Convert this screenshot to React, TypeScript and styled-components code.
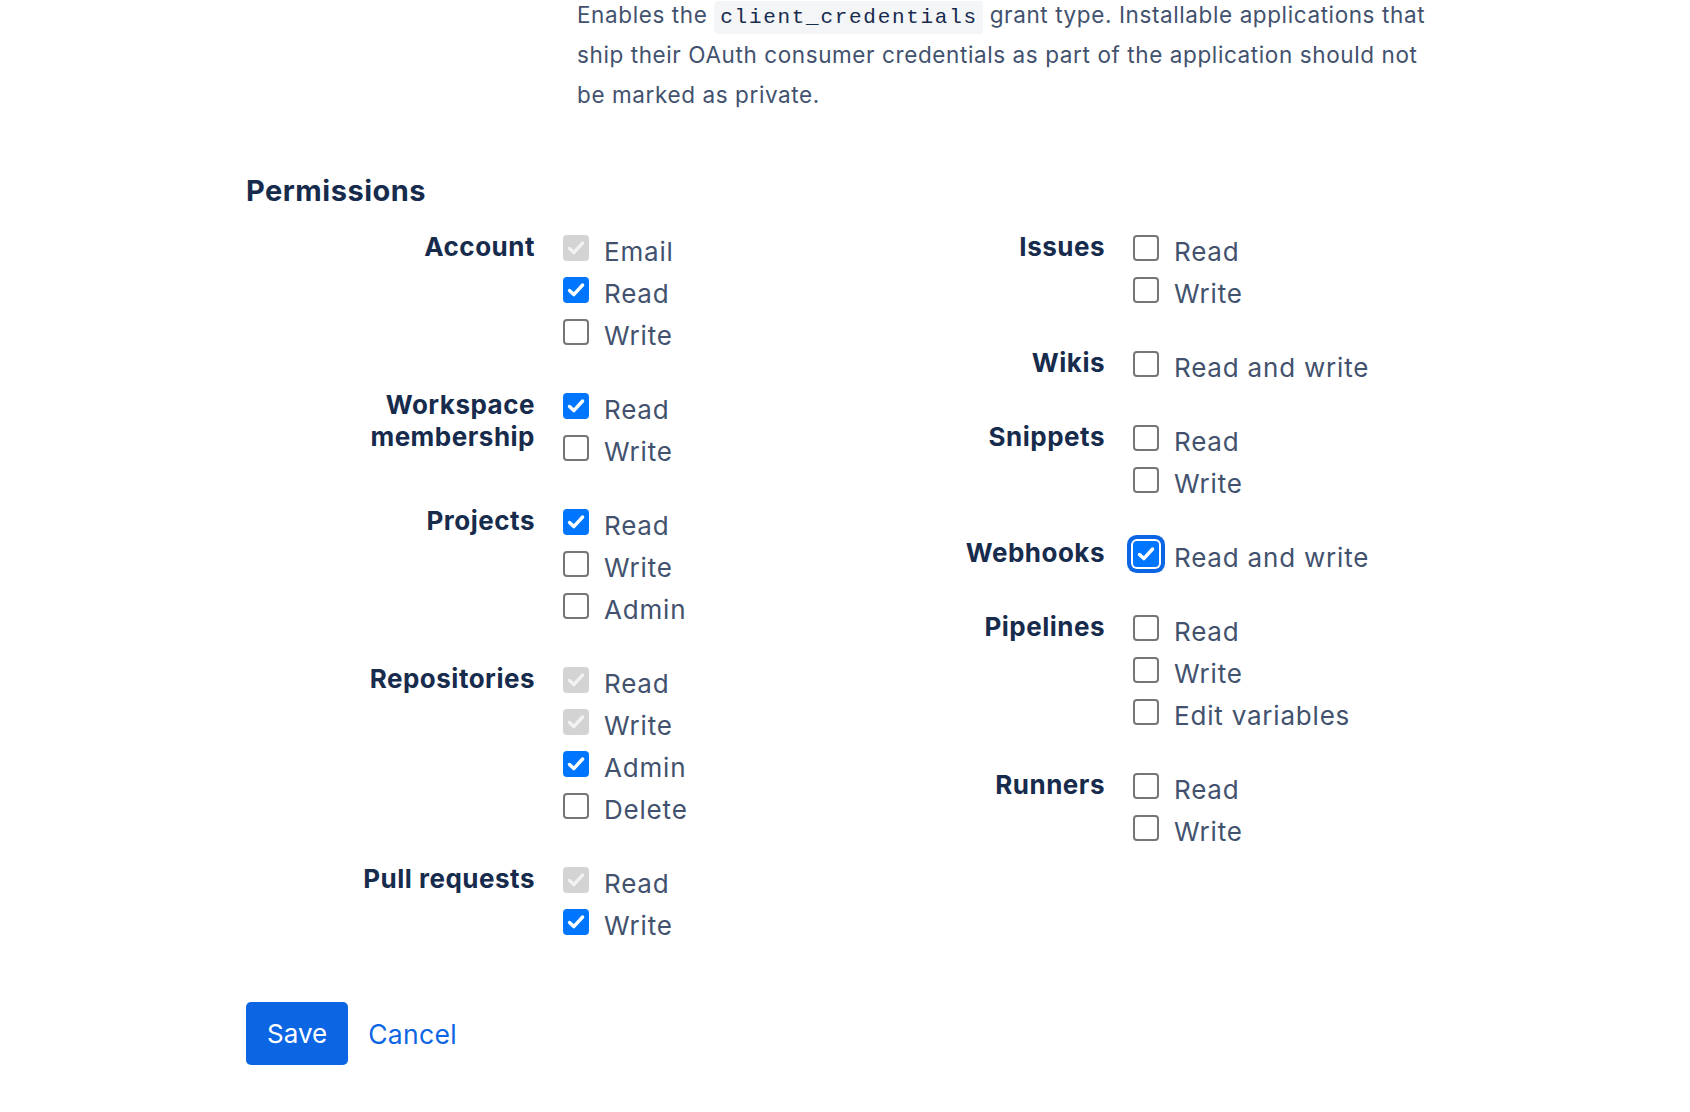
import { FunctionComponent, useState } from 'react';
import { createGlobalStyle, styled } from 'styled-components';

type CheckState = 'off' | 'on' | 'disabled';

type PermissionOption = {
  id: string;
  text: string;
  state: CheckState;
  focused?: boolean;
};

type PermissionGroup = {
  label: string;
  options: PermissionOption[];
};

const leftGroups: PermissionGroup[] = [
  {
    label: 'Account',
    options: [
      { id: 'account-email', text: 'Email', state: 'disabled' },
      { id: 'account-read', text: 'Read', state: 'on' },
      { id: 'account-write', text: 'Write', state: 'off' },
    ],
  },
  {
    label: 'Workspace membership',
    options: [
      { id: 'team-read', text: 'Read', state: 'on' },
      { id: 'team-write', text: 'Write', state: 'off' },
    ],
  },
  {
    label: 'Projects',
    options: [
      { id: 'project-read', text: 'Read', state: 'on' },
      { id: 'project-write', text: 'Write', state: 'off' },
      { id: 'project-admin', text: 'Admin', state: 'off' },
    ],
  },
  {
    label: 'Repositories',
    options: [
      { id: 'repo-read', text: 'Read', state: 'disabled' },
      { id: 'repo-write', text: 'Write', state: 'disabled' },
      { id: 'repo-admin', text: 'Admin', state: 'on' },
      { id: 'repo-delete', text: 'Delete', state: 'off' },
    ],
  },
  {
    label: 'Pull requests',
    options: [
      { id: 'pr-read', text: 'Read', state: 'disabled' },
      { id: 'pr-write', text: 'Write', state: 'on' },
    ],
  },
];

const rightGroups: PermissionGroup[] = [
  {
    label: 'Issues',
    options: [
      { id: 'issue-read', text: 'Read', state: 'off' },
      { id: 'issue-write', text: 'Write', state: 'off' },
    ],
  },
  {
    label: 'Wikis',
    options: [{ id: 'wiki', text: 'Read and write', state: 'off' }],
  },
  {
    label: 'Snippets',
    options: [
      { id: 'snippet-read', text: 'Read', state: 'off' },
      { id: 'snippet-write', text: 'Write', state: 'off' },
    ],
  },
  {
    label: 'Webhooks',
    options: [
      { id: 'webhook', text: 'Read and write', state: 'on', focused: true },
    ],
  },
  {
    label: 'Pipelines',
    options: [
      { id: 'pipeline-read', text: 'Read', state: 'off' },
      { id: 'pipeline-write', text: 'Write', state: 'off' },
      { id: 'pipeline-variable', text: 'Edit variables', state: 'off' },
    ],
  },
  {
    label: 'Runners',
    options: [
      { id: 'runner-read', text: 'Read', state: 'off' },
      { id: 'runner-write', text: 'Write', state: 'off' },
    ],
  },
];

const initialState = () => {
  const all = [...leftGroups, ...rightGroups].flatMap((g) => g.options);
  return Object.fromEntries(all.map((o) => [o.id, o.state])) as Record<
    string,
    CheckState
  >;
};

type CheckboxProps = {
  state: CheckState;
  focused?: boolean;
};
const Checkbox: FunctionComponent<CheckboxProps> = ({ state, focused }) => (
  <Box $state={state} $focused={!!focused}>
    {state !== 'off' && (
      <svg width="26" height="26" viewBox="0 0 26 26" aria-hidden>
        <path
          d="M6.5 13.5 L10.8 17.6 L19.6 8"
          fill="none"
          stroke={state === 'disabled' ? '#f2f2f2' : '#ffffff'}
          strokeWidth="3.4"
          strokeLinecap="round"
          strokeLinejoin="round"
        />
      </svg>
    )}
  </Box>
);

type GroupListProps = {
  groups: PermissionGroup[];
  values: Record<string, CheckState>;
  onToggle: (id: string) => void;
};
const GroupList: FunctionComponent<GroupListProps> = ({
  groups,
  values,
  onToggle,
}) => (
  <Column>
    {groups.map((group) => (
      <Group key={group.label}>
        <GroupLabel>{group.label}</GroupLabel>
        <Options>
          {group.options.map((option) => (
            <OptionRow
              key={option.id}
              onClick={() => onToggle(option.id)}
              $disabled={values[option.id] === 'disabled'}>
              <Checkbox state={values[option.id]} focused={option.focused} />
              {option.text}
            </OptionRow>
          ))}
        </Options>
      </Group>
    ))}
  </Column>
);

const App: FunctionComponent = () => {
  const [values, setValues] = useState(initialState);

  const handleToggle = (id: string) =>
    setValues((prev) => {
      if (prev[id] === 'disabled') return prev;
      return { ...prev, [id]: prev[id] === 'on' ? 'off' : 'on' };
    });

  return (
    <>
      <GlobalStyle />
      <Page>
        <Description>
          Enables the <Code>client_credentials</Code> grant type. Installable
          applications that ship their OAuth consumer credentials as part of
          the application should not be marked as private.
        </Description>
        <Heading>Permissions</Heading>
        <Columns>
          <GroupList
            groups={leftGroups}
            values={values}
            onToggle={handleToggle}
          />
          <GroupList
            groups={rightGroups}
            values={values}
            onToggle={handleToggle}
          />
        </Columns>
        <Actions>
          <SaveButton type="button">Save</SaveButton>
          <CancelButton type="button">Cancel</CancelButton>
        </Actions>
      </Page>
    </>
  );
};

const GlobalStyle = createGlobalStyle`
  body {
    margin: 0;
    background: #ffffff;
    font-family: Inter, "Noto Sans", "Liberation Sans", sans-serif;
  }
`;
const Page = styled.div`
  padding: 0 0 40px 246px;
`;
const Description = styled.p`
  margin: -5px 0 0 331px;
  width: 860px;
  font-size: 22.5px;
  line-height: 40px;
  letter-spacing: 0.6px;
  color: #42526e;
`;
const Code = styled.code`
  font-family: 'Liberation Mono', 'DejaVu Sans Mono', monospace;
  font-size: 21px;
  line-height: 1;
  letter-spacing: 1.7px;
  background: #f4f5f7;
  color: #172b4d;
  border-radius: 4px;
  padding: 5px 5px 5px 6px;
`;
const Heading = styled.h2`
  margin: 60px 0 24px;
  font-size: 29px;
  line-height: 32px;
  font-weight: 700;
  letter-spacing: 0.5px;
  color: #172b4d;
`;
const Columns = styled.div`
  display: grid;
  grid-template-columns: 570px 570px;
`;
const Column = styled.div`
  display: flex;
  flex-direction: column;
`;
const Group = styled.div`
  display: grid;
  grid-template-columns: 289px 1fr;
  column-gap: 28px;
  margin-bottom: 32px;
`;
const GroupLabel = styled.div`
  text-align: right;
  font-size: 26px;
  line-height: 32px;
  font-weight: 700;
  letter-spacing: 0.5px;
  color: #172b4d;
`;
const Options = styled.div`
  display: flex;
  flex-direction: column;
`;
const OptionRow = styled.label<{ $disabled: boolean }>`
  display: flex;
  align-items: flex-start;
  gap: 15px;
  height: 42px;
  font-size: 26px;
  line-height: 42px;
  letter-spacing: 0.8px;
  color: #42526e;
  cursor: ${({ $disabled }) => ($disabled ? 'default' : 'pointer')};
  user-select: none;
`;
const Box = styled.span<{ $state: CheckState; $focused: boolean }>`
  flex: none;
  box-sizing: border-box;
  width: 26px;
  height: 26px;
  margin-top: 4px;
  border-radius: 4px;
  display: flex;
  border: ${({ $state }) =>
    $state === 'off' ? '2px solid #767676' : '0 solid transparent'};
  background: ${({ $state }) =>
    $state === 'on' ? '#0075ff' : $state === 'disabled' ? '#d3d3d3' : '#fff'};
  box-shadow: ${({ $focused }) =>
    $focused ? '0 0 0 2px #ffffff, 0 0 0 6px #0c66e4' : 'none'};
  svg {
    display: block;
  }
`;
const Actions = styled.div`
  display: flex;
  align-items: center;
  gap: 20px;
  margin-top: 23px;
`;
const SaveButton = styled.button`
  height: 63px;
  padding: 0 21px;
  border: 0;
  border-radius: 5px;
  background: #0c66e4;
  color: #ffffff;
  font-family: inherit;
  font-size: 26px;
  cursor: pointer;
`;
const CancelButton = styled.button`
  height: 63px;
  padding: 0;
  border: 0;
  background: none;
  color: #0c66e4;
  font-family: inherit;
  font-size: 26.5px;
  letter-spacing: 0.3px;
  cursor: pointer;
`;

export default App;
